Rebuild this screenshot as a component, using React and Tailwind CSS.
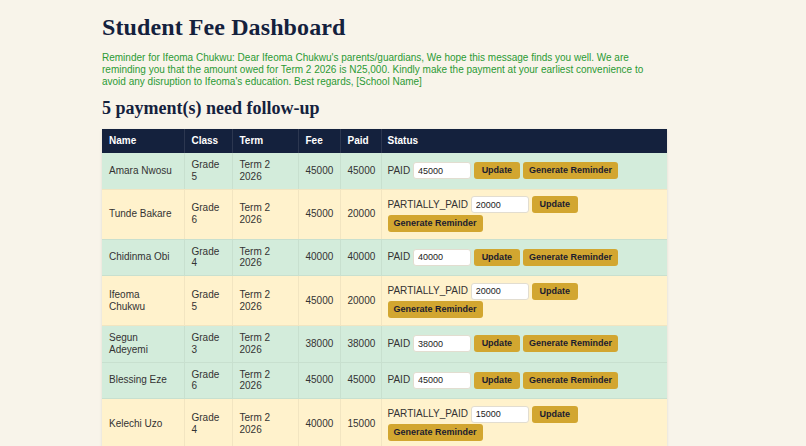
import { useState } from 'react';

const initialStudents = [
  { id: 1, name: 'Amara Nwosu', grade: 5, fee: 45000, paid: 45000 },
  { id: 2, name: 'Tunde Bakare', grade: 6, fee: 45000, paid: 20000 },
  { id: 3, name: 'Chidinma Obi', grade: 4, fee: 40000, paid: 40000 },
  { id: 4, name: 'Ifeoma Chukwu', grade: 5, fee: 45000, paid: 20000 },
  { id: 5, name: 'Segun Adeyemi', grade: 3, fee: 38000, paid: 38000 },
  { id: 6, name: 'Blessing Eze', grade: 6, fee: 45000, paid: 45000 },
  { id: 7, name: 'Kelechi Uzo', grade: 4, fee: 40000, paid: 15000 },
];

const btn =
  'inline-block align-middle mr-[3px] my-[0.75px] h-[17px] px-[6px] rounded-[3px] bg-[#d2a630] text-[#1b1b2f] text-[9px] font-bold leading-[17px]';

function StatusCell({ student }) {
  const [value, setValue] = useState(String(student.paid));
  const status = student.paid >= student.fee ? 'PAID' : 'PARTIALLY_PAID';
  return (
    <td className="px-[6px] py-[6px] align-middle">
      <span className="align-middle">{status}</span>{' '}
      <input
        value={value}
        onChange={(e) => setValue(e.target.value)}
        className="inline-block align-middle mr-[3px] my-[0.75px] w-[58px] h-[17px] px-1 rounded-[3px] bg-white border border-[#e2ddd0] text-[9px] text-[#222] outline-none"
      />
      <button className={`${btn} w-[46px]`}>Update</button>
      <button className={btn}>Generate Reminder</button>
    </td>
  );
}

export default function App() {
  const [students] = useState(initialStudents);
  const cell = 'px-[7px] py-[6px] align-middle border-r border-black/5';
  const head = 'px-[7px] py-[6px] leading-[12px] font-bold border-r border-white/10';

  return (
    <div className="min-h-screen bg-[#f8f4ea] font-['Liberation_Sans',Arial,sans-serif] text-[#333]">
      <div className="w-[602px] mx-auto pt-[13px]">
        <h1 className="font-['Liberation_Serif',Georgia,serif] font-bold text-[24px] leading-[29px] text-[#14213d] tracking-[0.1px]">
          Student Fee Dashboard
        </h1>
        <p className="mt-[10px] w-[565px] text-[10px] leading-[12px] text-[#2b9a34]">
          Reminder for Ifeoma Chukwu: Dear Ifeoma Chukwu's parents/guardians, We hope this message finds you well. We are
          reminding you that the amount owed for Term 2 2026 is N25,000. Kindly make the payment at your earliest convenience to
          avoid any disruption to Ifeoma's education. Best regards, [School Name]
        </p>
        <h2 className="mt-[9px] font-['Liberation_Serif',Georgia,serif] font-bold text-[18px] leading-[22px] text-[#14213d]">
          5 payment(s) need follow-up
        </h2>
        <table className="mt-[10px] w-[565px] table-fixed border-collapse text-[10px] leading-[11.75px] shadow-sm">
          <thead>
            <tr className="bg-[#14213d] text-white text-left">
              <th className={`w-[82px] ${head}`}>Name</th>
              <th className={`w-[48px] ${head}`}>Class</th>
              <th className={`w-[66px] ${head}`}>Term</th>
              <th className={`w-[42px] ${head}`}>Fee</th>
              <th className={`w-[41px] ${head}`}>Paid</th>
              <th className="w-[286px] px-[6px] py-[6px] leading-[12px] font-bold">Status</th>
            </tr>
          </thead>
          <tbody>
            {students.map((s) => (
              <tr
                key={s.id}
                className={`border-b border-black/5 ${s.paid >= s.fee ? 'bg-[#d3ecdb]' : 'bg-[#fff2cc]'}`}
              >
                <td className={cell}>{s.name}</td>
                <td className={cell}>Grade {s.grade}</td>
                <td className={cell}>Term 2 2026</td>
                <td className={cell}>{s.fee}</td>
                <td className={cell}>{s.paid}</td>
                <StatusCell student={s} />
              </tr>
            ))}
          </tbody>
        </table>
      </div>
    </div>
  );
}
